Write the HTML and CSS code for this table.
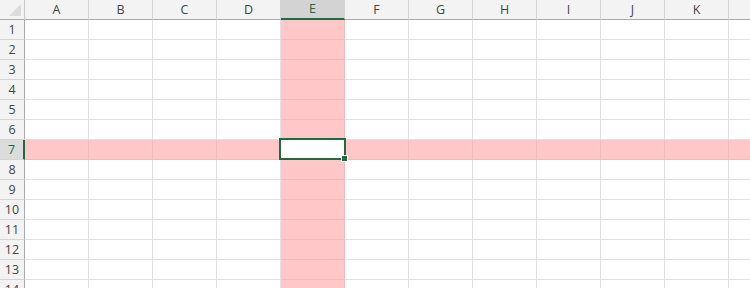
FILE: index.html
```html
<!DOCTYPE html>
<html lang="en">
<head>
    <meta charset="UTF-8">
    <meta name="viewport" content="width=device-width, initial-scale=1.0">
    <title>Sheet1</title>
    <link rel="stylesheet" href="styles.css">
</head>
<body>
    <div class="sheet" id="sheet"></div>

    <script>
        const sheet = document.getElementById("sheet");
const columns = ["A", "B", "C", "D", "E", "F", "G", "H", "I", "J", "K", "L"];
const rowCount = 14;
const activeCol = "E";
const activeRow = 7;

function addCell(className, text) {
    const cell = document.createElement("div");
    cell.className = className;
    if (text !== undefined) cell.textContent = text;
    sheet.appendChild(cell);
    return cell;
}

// header row
addCell("corner").innerHTML = '<span class="corner-arrow"></span>';
columns.forEach(col => {
    addCell(col === activeCol ? "col-head active" : "col-head", col);
});

// body rows
for (let r = 1; r <= rowCount; r++) {
    addCell(r === activeRow ? "row-head active" : "row-head", r);
    columns.forEach(col => {
        let cls = "cell";
        if (col === activeCol || r === activeRow) cls += " hl";
        const cell = addCell(cls);
        if (col === activeCol && r === activeRow) {
            cell.className = "cell current";
            cell.innerHTML = '<span class="fill-handle"></span>';
        }
    });
}
    </script>
</body>
</html>
```

FILE: styles.css
```css
body {
    margin: 0;
    background: #fff;
    font-family: "Open Sans", "Noto Sans", Arial, sans-serif;
    overflow: hidden;
}

.sheet {
    display: grid;
    grid-template-columns: 25px repeat(12, 64px);
    grid-template-rows: 20px;
    grid-auto-rows: 20px;
    width: 793px;
}

.sheet > div {
    box-sizing: border-box;
}

.corner {
    position: relative;
    background: #f3f3f3;
    border-right: 1px solid #c8c8c8;
    border-bottom: 1px solid #ababab;
}

.corner-arrow {
    position: absolute;
    right: 3px;
    bottom: 3px;
    width: 0;
    height: 0;
    border-left: 12px solid transparent;
    border-bottom: 12px solid #dcdcdc;
}

.col-head {
    background: #f3f3f3;
    border-right: 1px solid #d4d4d4;
    border-bottom: 1px solid #ababab;
    color: #444;
    font-size: 12.5px;
    text-align: center;
    line-height: 19px;
}

.col-head.active {
    background: #d3d3d3;
    border-bottom: 2px solid #1e6b41;
    color: #1e6b41;
    line-height: 18px;
}

.row-head {
    background: #f3f3f3;
    border-right: 1px solid #ababab;
    border-bottom: 1px solid #d4d4d4;
    color: #444;
    font-size: 12.5px;
    text-align: center;
    line-height: 19px;
}

.row-head.active {
    background: #dcdcdc;
    border-right: 2px solid #1e6b41;
    color: #1e6b41;
}

.cell {
    border-right: 1px solid #e1e1e1;
    border-bottom: 1px solid #e1e1e1;
}

.cell.hl {
    background: #ffc7c7;
    border-color: #efbcbc;
}

.cell.current {
    position: relative;
    background: #fff;
}

/* selection outline sits over the neighbouring gridlines */
.cell.current::after {
    content: "";
    position: absolute;
    left: -2px;
    top: -2px;
    right: -2px;
    bottom: -1px;
    border: 2px solid #1e6b41;
    pointer-events: none;
}

.fill-handle {
    position: absolute;
    right: -4px;
    bottom: -3px;
    width: 5px;
    height: 5px;
    background: #1e6b41;
    border: 1px solid #fff;
    z-index: 2;
}
```
